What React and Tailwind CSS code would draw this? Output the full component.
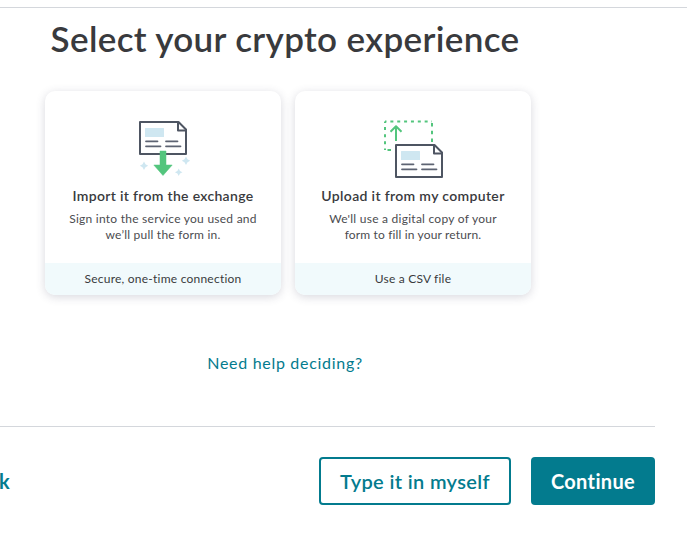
import React from "react";

const DocumentShape = () => (
  <g>
    <path d="M5 7h38.500l7.500 7.500V39H5z" fill="#fff" stroke="#4e5562" strokeWidth="2" strokeLinejoin="round" />
    <path d="M43 7v8.500h8" fill="none" stroke="#4e5562" strokeWidth="2" strokeLinejoin="round" />
    <rect x="10" y="13" width="19" height="9" rx="0.500" fill="#cfe7f1" />
    <path
      d="M11 26.300h11.500M31 26.300h11.500M11 31.300h14.500M31 31.300h14.500"
      fill="none"
      stroke="#5d6372"
      strokeWidth="1.800"
      strokeLinecap="round"
    />
  </g>
);

const ImportIcon = () => (
  <svg width="56" height="64" viewBox="0 0 56 64" className="block">
    <DocumentShape />
    <path
      d="M25 36h6v14h6.200l-9.200 10.500-9.200-10.500H25z"
      fill="#53c57d"
      stroke="#53c57d"
      strokeWidth="0.500"
      strokeLinejoin="round"
    />
    <g fill="#cfe7f1">
      <path d="M9 46.500l1.500 2.700 2.700 1.500-2.700 1.500L9 54.900l-1.500-2.700-2.700-1.500 2.700-1.500z" />
      <path d="M51 41.500l1.500 2.700 2.700 1.500-2.700 1.500-1.500 2.700-1.500-2.700-2.700-1.500 2.700-1.500z" />
      <path d="M43.700 53.500l1.300 2.500 2.500 1.300-2.500 1.300-1.300 2.500-1.300-2.500-2.500-1.300 2.500-1.300z" />
    </g>
  </svg>
);

const UploadIcon = () => (
  <svg width="66" height="64" viewBox="0 0 66 64" className="block">
    <g fill="none" stroke="#53c57d" strokeWidth="2">
      <path d="M5 6.500h47" strokeDasharray="3 3.860" strokeDashoffset="1.500" />
      <path d="M5 6.500v28.500" strokeDasharray="3 4.100" strokeDashoffset="1.500" />
      <path d="M52 8v20" strokeDasharray="3.500 4.200" />
      <path d="M7.500 35H11" />
      <path d="M16 26V11.500M10.500 16.800L16 11.300l5.500 5.500" strokeLinejoin="round" />
    </g>
    <g transform="translate(11 23)">
      <DocumentShape />
    </g>
  </svg>
);

const OptionCard = ({ icon, title, titleClass, lines, footer, footerClass }) => (
  <div className="w-[236px] h-[204px] flex flex-col items-center rounded-[10px] bg-white overflow-hidden text-[#393a3d] shadow-[0_2px_10px_rgba(60,60,90,0.2)]">
    <div className="h-[94px] pt-6">{icon}</div>
    <h2 className={`text-[14px] leading-[22px] font-semibold whitespace-nowrap ${titleClass}`}>{title}</h2>
    <div className="pt-1 flex-1 flex flex-col items-center text-[#4b4c50]">
      {lines.map((line) => (
        <p key={line.text} className={`text-[12px] leading-4 whitespace-nowrap ${line.className}`}>
          {line.text}
        </p>
      ))}
    </div>
    <div className={`w-full h-8 bg-[#f1fafc] text-center text-[12px] leading-8 whitespace-nowrap ${footerClass}`}>
      {footer}
    </div>
  </div>
);

export default function App() {
  return (
    <div className="h-[541px] w-[687px] overflow-hidden bg-white pt-[7px] font-['Lato',sans-serif]">
      <main className="border-t border-[#d4d7dc]">
        <div className="w-[570px] flex flex-col items-center">
          <h1 className="h-[83px] pt-1.5 text-[35px] leading-[48px] font-semibold tracking-[0.350px] whitespace-nowrap text-[#393a3d]">
            Select your crypto experience
          </h1>
          <div className="flex gap-3.5 pl-1.5">
            <OptionCard
              icon={<ImportIcon />}
              title="Import it from the exchange"
              titleClass="tracking-[0.310px]"
              lines={[
                { text: "Sign into the service you used and", className: "tracking-[0.250px]" },
                { text: "we’ll pull the form in.", className: "tracking-[0.220px]" },
              ]}
              footer="Secure, one-time connection"
              footerClass="tracking-[0.230px]"
            />
            <OptionCard
              icon={<UploadIcon />}
              title="Upload it from my computer"
              titleClass="tracking-[0.340px]"
              lines={[
                { text: "We'll use a digital copy of your", className: "tracking-[0.250px]" },
                { text: "form to fill in your return.", className: "tracking-[0.150px]" },
              ]}
              footer="Use a CSV file"
              footerClass="tracking-[0.200px]"
            />
          </div>
          <a href="#" className="mt-14 text-[16px] leading-6 tracking-[0.700px] text-[#037b8e]">
            Need help deciding?
          </a>
        </div>
      </main>
      <footer className="mt-[51px] w-[655px] pt-[30px] flex items-center border-t border-[#d4d7dc] text-[20px] font-semibold tracking-[0.350px]">
        <a href="#" className="flex-1 -ml-px text-[#037b8e] font-bold">k</a>
        <button className="w-48 h-12 rounded border-2 border-[#037b8e] text-[#037b8e] whitespace-nowrap">
          Type it in myself
        </button>
        <button className="ml-5 w-31 h-12 rounded bg-[#037b8e] text-white font-bold">Continue</button>
      </footer>
    </div>
  );
}
